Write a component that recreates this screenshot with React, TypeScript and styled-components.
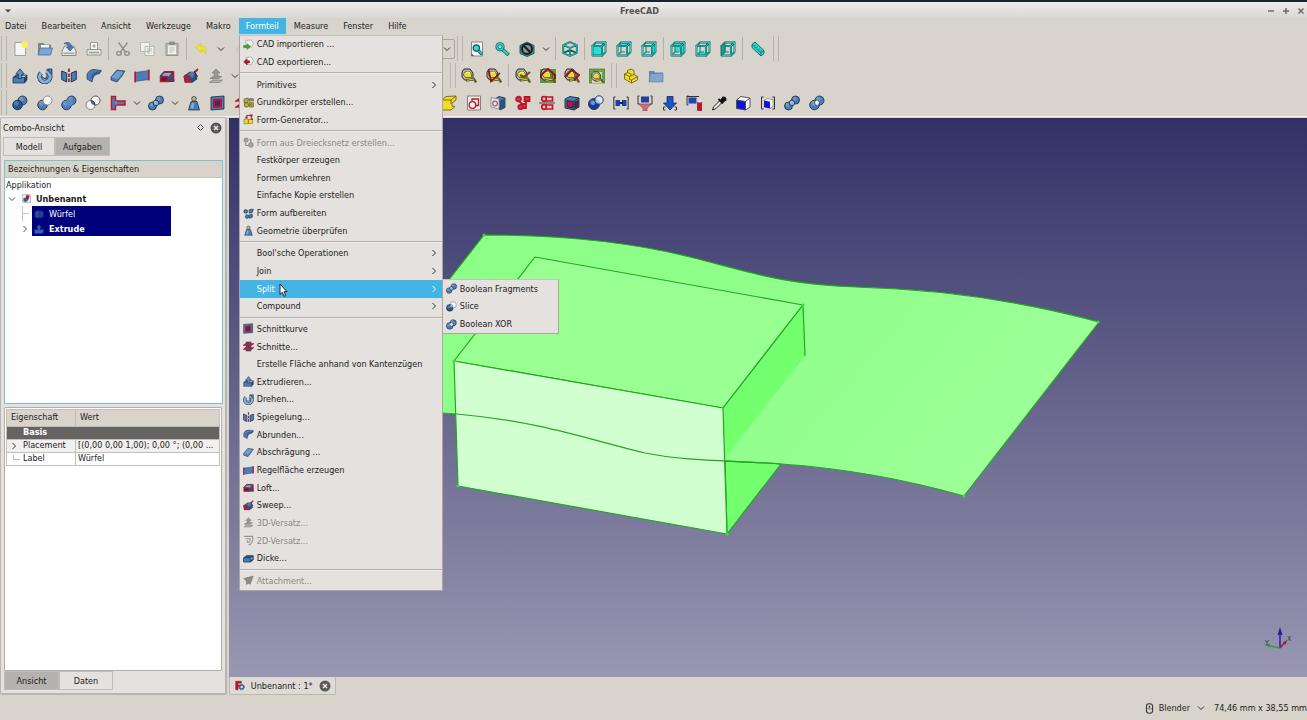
import React from "react";
import styled, { createGlobalStyle, css } from "styled-components";

const color = {
  chrome: "#d8d4cc",
  panel: "#e4e1de",
  tabOff: "#b5b3af",
  line: "#b0aca6",
  text: "#1c1c1c",
  muted: "#8b8986",
  blue: "#42b5e5",
  navy: "#00007c",
};

const GlobalStyle = createGlobalStyle`
  * { box-sizing: border-box; }
  html, body { margin: 0; padding: 0; }
  body {
    background: ${color.chrome};
    color: ${color.text};
    font: 9px/12px "DejaVu Sans Condensed", "DejaVu Sans", sans-serif;
    overflow: hidden;
  }
  button, select {
    font: inherit;
    color: inherit;
    background: none;
    border: 0;
    padding: 0;
    margin: 0;
  }
  svg { display: block; }
`;

/* ---------- icons, all on a 16 x 16 grid ---------- */

const B = "#4a7db8";
const L = "#86b0dc";
const D = "#2b527f";
const K = "#16283e";
const R = "#c01428";
const T = "#2fdcd4";
const TK = "#0e5a58";
const Y = "#f0dc28";
const YK = "#6e6410";

const Ball = ({ x, y, r, fill = B }: { x: number; y: number; r: number; fill?: string }) => (
  <g>
    <circle cx={x} cy={y} r={r} fill={fill} stroke={K} strokeWidth=".8" />
    <circle cx={x - r / 4} cy={y - r / 3} r={r / 2} fill="#fff" opacity=".22" />
  </g>
);

const Cube = ({ front = "none", top = "none", side = "none", back = false }: { front?: string; top?: string; side?: string; back?: boolean }) => (
  <g stroke={TK} strokeLinejoin="round">
    {back && <path d="M5 1.500h9.500v9.500H5z" fill={T} stroke="none" />}
    <path d="M1.500 5h9.500v9.500h-9.500z" fill={front} strokeWidth="1.800" />
    <path d="M1.500 5L5 1.500h9.500L11 5z" fill={top} strokeWidth="1.800" />
    <path d="M11 5l3.500-3.500v9.500L11 14.500z" fill={side} strokeWidth="1.800" />
    <path d="M1.500 5h9.500v9.500h-9.500zM1.500 5L5 1.500h9.500L11 5M14.500 1.500v9.500L11 14.500" fill="none" stroke={T} strokeWidth=".8" />
    {front === "none" && <path d="M5 6v5M5 11h4M5 11l-2 2" fill="none" stroke="#157f7a" strokeWidth="1.100" />}
  </g>
);

const Tape = () => (
  <g>
    <path d="M1 4l2-3h6l3 4v7H3.500L1 9z" fill="#b0b0a6" stroke="#2d2d2a" strokeWidth="1" />
    <path d="M2.500 7c0-4 6.500-5 8-1v3.500h-6z" fill={Y} stroke="#4f4a10" strokeWidth=".7" />
    <path d="M4.500 5.500c1-1.800 3.500-2 4.500-.5" fill="none" stroke="#fff9b8" strokeWidth="1" />
    <path d="M5 12.500l8-1.500 2 3.500" fill="none" stroke="#5a5a2c" strokeWidth="2.400" />
    <path d="M6 12.300l6.500-1.200" fill="none" stroke={Y} strokeWidth=".9" />
  </g>
);

const Page = () => <path d="M3 1.500h10.500v13H3z" fill="#f6f6f4" stroke="#8f8f8b" strokeWidth=".8" />;

const Brackets = () => (
  <path d="M3.500 2H1.500v12h2M12.500 2h2v12h-2" fill="none" stroke="#333" strokeWidth="1" />
);

const art: Record<string, React.ReactNode> = {
  new: (
    <g>
      <Page />
      <circle cx="12.500" cy="3.500" r="3.500" fill="#f6f06a" opacity=".9" />
      <circle cx="12.500" cy="3.500" r="1.700" fill="#fffb2a" />
    </g>
  ),
  open: (
    <g>
      <path d="M1.500 13V2.500h5l1 1.500h6v9z" fill="#8c8c88" stroke="#6b6b68" strokeWidth=".7" />
      <path d="M4 4h8v4H4z" fill="#f3f3f0" />
      <path d="M1 14L3 7h12.500l-2 7z" fill="#7aa6d8" stroke="#47709f" strokeWidth=".8" />
    </g>
  ),
  save: (
    <g>
      <path d="M1 10l2.500-5h9l2.500 5v4.500H1z" fill="#e9e9e5" stroke="#7d7d79" strokeWidth=".9" />
      <path d="M2.500 11.500h11v1.500h-11z" fill="#a8a8a3" />
      <path d="M3 2.500c4-2.500 7.500-.5 7.500 3.500h2L9 10 5.500 6h2c0-2-1.500-3.500-4.500-3.500z" fill={B} stroke={D} strokeWidth=".7" />
    </g>
  ),
  print: (
    <g stroke="#85857f" strokeWidth=".8">
      <path d="M4.500 1.500h7v7h-7z" fill="#fbfbf9" />
      <path d="M8 3v4M6 5h4" />
      <path d="M1 8.500h14V14H1z" fill="#e6e6e2" />
      <path d="M3 11.500h10" stroke="#9b9b96" strokeWidth="1.400" />
    </g>
  ),
  cut: (
    <g fill="none" stroke="#8b8b86" strokeWidth="1.300">
      <path d="M3.500 1.500l7 9.500M12.500 1.500l-7 9.500" />
      <ellipse cx="4" cy="12.500" rx="2.300" ry="1.800" />
      <ellipse cx="12" cy="12.500" rx="2.300" ry="1.800" />
    </g>
  ),
  copy: (
    <g fill="#efefec" stroke="#aeaea9" strokeWidth=".8">
      <path d="M1.500 1.500h9v9h-9zM6 5.500h9v9H6z" />
      <path d="M8 8h5M8 10h5M8 12h3" />
    </g>
  ),
  paste: (
    <g stroke="#94948f" strokeWidth="1">
      <path d="M2 2.500h12v12H2z" fill="#bcbab2" />
      <path d="M4 4.500h8v8.500H4z" fill="#efefec" stroke="none" />
      <path d="M5.500 1h5v2.500h-5z" fill="#8b8b86" />
      <path d="M5.500 7h5M5.500 9h5M5.500 11h3" strokeWidth=".6" />
    </g>
  ),
  undo: <path d="M1.500 6.500L7 2v3c5 0 6.500 3 4.500 8.500C11 10.500 9.500 9.500 7 9.500V12z" fill="#eadf3c" stroke="#cfc23a" strokeWidth=".6" />,
  redo: <path d="M14.500 6.500L9 2v3c-5 0-6.500 3-4.500 8.500C5 10.500 6.500 9.500 9 9.500V12z" fill="#cfccc4" />,
  extrude: (
    <g stroke={K} strokeWidth=".7" strokeLinejoin="round">
      <path d="M1 9.500l3-2.500h11l-2.500 2.500V15L15 12V7" fill={D} />
      <path d="M1 9.500h11.500v5.500H1z" fill={B} />
      <path d="M6.300 10.500V6H3.800L8 .8 12.200 6H9.700v4.500z" fill="#5f93cc" />
    </g>
  ),
  revolve: (
    <g>
      <path d="M9 3.500A5.300 5.300 0 1 1 4 5" fill="none" stroke={K} strokeWidth="4.600" />
      <path d="M9 3.500A5.300 5.300 0 1 1 4 5" fill="none" stroke={L} strokeWidth="3.200" />
      <path d="M5 8.500a3 3 0 0 0 5 1V6" fill="none" stroke={D} strokeWidth="1.300" />
      <path d="M10.500 1h4.500v5.500l-2-1.500z" fill={B} stroke={K} strokeWidth=".7" />
    </g>
  ),
  mirror: (
    <g>
      <path d="M.7 3l5 2v9l-5-2.500zM15.300 3l-5 2v9l5-2.500z" fill={B} stroke={K} strokeWidth=".9" />
      <path d="M8 .5v15" stroke="#90232c" strokeWidth="1.700" strokeDasharray="3.500 1.500" />
    </g>
  ),
  fillet: (
    <g stroke={K} strokeWidth=".6">
      <path d="M1 7c1-4 4-5.500 7-5.500l7.500 1L13 6c-4 0-6 2-7 8L1 11z" fill={B} />
      <path d="M5.500 8c1-3 3-4 7-4.500l3-1L13 6c-4 0-6 2-7 8z" fill={D} stroke="none" opacity=".65" />
    </g>
  ),
  chamfer: (
    <g stroke={K} strokeWidth=".6">
      <path d="M1 9l6-7 8 1-3 5-5 6-6-2z" fill={B} />
      <path d="M1.500 9.500L7.500 3l6 1-6 7z" fill={L} stroke="none" opacity=".65" />
    </g>
  ),
  ruled: (
    <g>
      <path d="M1 4.500l14-2v9l-14 2z" fill={B} stroke={D} strokeWidth=".6" />
      <path d="M1.200 3.500v11M14.800 1.500v11" stroke={R} strokeWidth="1.600" />
    </g>
  ),
  loft: (
    <g>
      <path d="M1 8l4-4.500h9l1 10H8z" fill={D} stroke={K} strokeWidth=".8" />
      <path d="M5 4h9.500v9.500" fill="none" stroke={R} strokeWidth="1.600" />
      <path d="M2.500 7.500L5.500 5h7L9 9z" fill={L} />
      <path d="M1.500 8.500h7l.5 5H1.500z" fill="#3c2a5c" stroke={R} strokeWidth="1.600" />
    </g>
  ),
  sweep: (
    <g>
      <path d="M1 8l6-4 5 1 2 6-5 3.500-7-1z" fill={D} stroke={K} strokeWidth=".7" />
      <path d="M4.500 7l4-3.500 4 1-3 5.500z" fill={B} />
      <path d="M1.500 9l4.500-1 1.500 5.500-5 .5zM12 4l3-3" fill="none" stroke={R} strokeWidth="1.800" />
      <path d="M11 3l3.500 6" stroke={K} strokeWidth="1.200" />
    </g>
  ),
  offset3d: (
    <g fill="#989894" stroke="#71716d" strokeWidth=".6">
      <path d="M1.500 14.500l3-2.500h10l-3 2.500z" fill="#b2b1ac" />
      <path d="M6.300 8V5H4L8 1l4 4H9.700v3l4 .5-3.200 2H2l3-2z" />
    </g>
  ),
  offset2d: (
    <g fill="none" stroke="#92928e" strokeWidth="1.500">
      <path d="M1.500 2H14c1 6-1 11-6 12.500M4 5.500h6.500c.3 3-1 5-3 5.500-2 0-2-2-.5-3" />
    </g>
  ),
  boolCombo: (
    <g>
      <Ball x={10.5} y={5.500} r={4.500} />
      <Ball x={5.500} y={10} r={4.800} fill="#28558e" />
    </g>
  ),
  boolCut: (
    <g>
      <Ball x={5.500} y={10} r={4.800} fill={B} />
      <circle cx="10.500" cy="5.500" r="4.500" fill="#f6f6f4" stroke="#777" strokeWidth=".8" />
    </g>
  ),
  boolFuse: (
    <g>
      <Ball x={10.5} y={5.500} r={4.500} />
      <Ball x={5.500} y={10} r={4.800} />
      <circle cx="8.500" cy="7.500" r="3.400" fill="#5c8dc6" />
    </g>
  ),
  boolCommon: (
    <g>
      <g fill="#f4f4f2" stroke="#777" strokeWidth=".9">
        <circle cx="10.500" cy="5.500" r="4.500" />
        <circle cx="5.500" cy="10" r="4.500" />
      </g>
      <path d="M6 5.600a4.500 4.500 0 0 1 4 4.300 4.500 4.500 0 0 1-4-4.300z" fill={B} stroke={K} strokeWidth=".8" />
      <path d="M10.500 1a4.500 4.500 0 1 0 .1 0z" fill="none" stroke="#777" strokeWidth=".8" />
    </g>
  ),
  slice: (
    <g>
      <circle cx="10.500" cy="5.500" r="4.500" fill="#f6f6f4" stroke="#777" strokeWidth=".8" />
      <Ball x={5.500} y={10} r={4.800} fill={D} />
      <circle cx="8" cy="7.500" r="2" fill={L} />
    </g>
  ),
  fragments: (
    <g>
      <Ball x={11.500} y={5} r={4} />
      <Ball x={4.500} y={11} r={4} />
      <Ball x={8} y={8} r={2.800} fill={L} />
    </g>
  ),
  xor: (
    <g>
      <Ball x={10.5} y={5.500} r={4.500} />
      <Ball x={5.500} y={10} r={4.800} />
      <ellipse cx="8" cy="7.800" rx="2.400" ry="2.800" fill="#e6ecf2" stroke={K} strokeWidth=".6" />
    </g>
  ),
  join: (
    <g>
      <path d="M1.500 1.500h4v4.500h9.500v4H5.500v4.500h-4z" fill={B} stroke={R} strokeWidth="1.500" />
      <path d="M6 6v4" stroke={L} strokeWidth=".8" />
    </g>
  ),
  weight: (
    <g stroke={K} strokeWidth=".7">
      <circle cx="8" cy="3.800" r="2.300" fill="#c8b574" />
      <path d="M5 6.500h6l2.500 8.500h-11z" fill={B} />
      <path d="M6 8l-1.500 5.500h3L8 8z" fill={L} stroke="none" />
    </g>
  ),
  section: (
    <g>
      <path d="M1 2l13-1v13l-13 1z" fill={B} stroke={K} strokeWidth=".8" />
      <path d="M4 5l7-.5v7l-7 .5z" fill="#3f2b63" stroke={R} strokeWidth="2" />
    </g>
  ),
  sections: (
    <g>
      <path d="M4 1h8v14H4z" fill={D} />
      <path d="M1 6l3-2h11l-3 2zM1 12l3-2h11l-3 2z" fill={B} stroke={R} strokeWidth="1.500" />
    </g>
  ),
  thickness: (
    <g stroke={K} strokeWidth=".7">
      <path d="M1 7l4-3.500h10V10l-4 3H1z" fill={D} />
      <path d="M1 7h10v6H1z" fill={B} />
      <circle cx="12.500" cy="8" r="2" fill={L} />
    </g>
  ),
  attach: <path d="M1 5l14-3.500-4.500 12-3-1.500L5 14V9z" fill="#8b8b88" stroke="#6f6f6c" strokeWidth=".7" />,
  mesh: (
    <g fill="#a5a4a1" stroke="#858481" strokeWidth="1">
      <circle cx="4.500" cy="4.500" r="3.200" />
      <circle cx="11.500" cy="11.500" r="3.500" />
      <path d="M4 8v4.500h4M9 4h2.500v4" fill="none" strokeWidth="1.500" />
    </g>
  ),
  refine: (
    <g fill={B} stroke={K} strokeWidth=".9">
      <circle cx="4" cy="5" r="2.700" />
      <path d="M9 2.500l6-1-1.500 5-4.500 1z" />
      <circle cx="6" cy="12.500" r="2.600" />
      <path d="M9 10l4.500-1v4.500L9.500 15z" />
    </g>
  ),
  import: (
    <g>
      <path d="M4 2l8-.5 3 5-3 6.500-7-1z" fill="#f3f3f0" stroke="#8e8e8a" strokeWidth=".8" />
      <path d="M1 9.500h5V7l5 4-5 4v-2.500H1z" fill="#48a53a" stroke="#236b1b" strokeWidth=".7" />
    </g>
  ),
  export: (
    <g>
      <path d="M4 2l8-.5 3 5-3 6.500-7-1z" fill="#f3f3f0" stroke="#8e8e8a" strokeWidth=".8" />
      <path d="M9.500 7H6V4L1 8.500 6 13v-3h3.500z" fill={R} stroke="#6b0812" strokeWidth=".7" />
    </g>
  ),
  primitives: (
    <g fill="#b9b13a" stroke="#4f4b15" strokeWidth=".9">
      <path d="M1.500 3l6-1.500v6l-6 1z" />
      <path d="M9 6V2.500h6V6" fill="#8e8c6b" />
      <circle cx="5" cy="11.500" r="3.300" />
      <path d="M9 7.500h6v7H9z" />
      <circle cx="12" cy="11" r="1.300" fill={Y} />
    </g>
  ),
  builder: (
    <g>
      <path d="M1.500 8l6-1v7l-6 .5zM8 8h6v5.500l-6 .5z" fill={Y} stroke={YK} strokeWidth=".8" />
      <path d="M5.500 5V2h6M12 6V3" fill="none" stroke="#333" strokeWidth="1.200" />
      <path d="M3.500 3.500h3v3h-3zM10 .8h4v3h-4zM11 6h3.500v2.500H11z" fill={R} />
    </g>
  ),
  fitAll: (
    <g>
      <path d="M2.500 1h11v14h-11z" fill="#f6f6f4" stroke="#7d7d79" strokeWidth=".9" />
      <path d="M9 9l4 4.500" stroke={TK} strokeWidth="3.200" />
      <path d="M9 9l4 4" stroke={T} strokeWidth="1.600" />
      <circle cx="7.300" cy="7" r="3.200" fill={T} stroke={TK} strokeWidth="1.200" />
      <path d="M2.500 12.500l2.500 2.500h-2.500z" fill="#555" />
    </g>
  ),
  zoomSel: (
    <g>
      <path d="M8 8l6.500 6" stroke={TK} strokeWidth="3.600" />
      <path d="M8 8l6 5.500" stroke={T} strokeWidth="2" />
      <circle cx="6" cy="5.800" r="4.600" fill={TK} />
      <circle cx="6" cy="5.800" r="3.700" fill={T} />
      <circle cx="6" cy="5.800" r="1.900" fill="#b9e6df" stroke={TK} strokeWidth=".8" />
    </g>
  ),
  drawStyle: (
    <g>
      <path d="M1 4.500l7-3.500 7 3.500v8L8 15.500l-7-3z" fill="#219c94" stroke={TK} strokeWidth=".9" />
      <circle cx="8" cy="8" r="5" fill="#87908c" stroke="#22171a" strokeWidth="2" />
      <path d="M4.500 4.500l7 7" stroke="#22171a" strokeWidth="2" />
    </g>
  ),
  axo: (
    <g fill="none" strokeLinejoin="round">
      <path d="M1.200 4L8 1.200 14.800 4v8L8 15l-6.800-3zM1.200 4L8 7l6.800-3M8 7v8M1.200 12L8 9l6.800 3" stroke={TK} strokeWidth="1.800" />
      <path d="M1.200 4L8 1.200 14.800 4v8L8 15l-6.800-3zM1.200 4L8 7l6.800-3M8 7v8" stroke={T} strokeWidth=".7" />
    </g>
  ),
  front: <Cube front={T} />,
  top: <Cube top={T} />,
  right: <Cube side={T} />,
  rear: <Cube back />,
  bottom: (
    <g>
      <path d="M1.500 14.500L5 11h9.500L11 14.500z" fill={T} />
      <Cube />
    </g>
  ),
  left: (
    <g>
      <Cube />
      <path d="M1.500 5L5 1.500V11l-3.500 3.500z" fill="#139f92" stroke={TK} strokeWidth=".6" />
    </g>
  ),
  ruler: (
    <g>
      <path d="M2 3.500L5 1l9 8.500v3L11 15 2 6.500z" fill={T} stroke={TK} strokeWidth=".9" />
      <path d="M2 3.500l9 8.500 3-2.500M11 12v3" stroke={TK} strokeWidth=".7" fill="none" />
      <path d="M5.500 3.500L4.500 5M7.500 5.500L6.500 7M9.500 7.500L8.500 9M11.500 9l-1 2" stroke={TK} strokeWidth=".7" />
    </g>
  ),
  tape: <Tape />,
  tapeAngle: (
    <g>
      <Tape />
      <path d="M14 5L5 13.500 2.500 1.500" fill="none" stroke="#7e1518" strokeWidth="1.600" />
    </g>
  ),
  tapeRefresh: (
    <g>
      <Tape />
      <path d="M5 7l4 2 6-5" fill="none" stroke="#5b5214" strokeWidth="2" />
    </g>
  ),
  tapeAll: (
    <g>
      <path d="M0 1h16v14H0z" fill="#5d9a3a" />
      <Tape />
      <path d="M1 10V7l7-6 7 6v4" fill="none" stroke="#8f1519" strokeWidth="2" />
    </g>
  ),
  tape3d: (
    <g>
      <Tape />
      <path d="M1 9L7.500 2 15 7l-5 5" fill="none" stroke="#8f1519" strokeWidth="2" />
    </g>
  ),
  tapeDelta: (
    <g>
      <path d="M0 1h16v14H0z" fill="#6aa544" stroke="#3c6625" strokeWidth=".6" />
      <path d="M3 4h10v11H3z" fill={color.chrome} />
      <g transform="translate(2 3) scale(.8)">
        <Tape />
      </g>
    </g>
  ),
  part: (
    <g stroke={YK} strokeWidth=".9" strokeLinejoin="round">
      <path d="M1.500 6l3-1.500V2.500L8 1l3 1.500v4l3.500 2V12L8.500 15l-7-4z" fill={Y} />
      <path d="M1.500 6l5 2.500v3L8.500 12v3M6.500 8.500L11 6.500M8.500 12l6-3.500M4.500 4.500L8 6v2" fill="none" />
    </g>
  ),
  folder: (
    <g>
      <path d="M1 3h5l1 1.500h8V14H1z" fill="#6187b2" />
      <path d="M2.500 5.500H15V14H1z" fill="#82a6d0" stroke="#5a7ea8" strokeWidth=".6" />
    </g>
  ),
  yellowL: (
    <g stroke={YK} strokeWidth=".9">
      <path d="M1 5l4-3.500 10-.5v4L11 8v3l3 .5-4 3.500H1z" fill={Y} />
      <path d="M1 5h9l5-4M10 5v4" fill="none" />
    </g>
  ),
  sketch: (
    <g>
      <path d="M1.500 1h13v14h-13z" fill="#ededea" stroke="#777" strokeWidth=".9" />
      <circle cx="6.500" cy="10" r="3.300" fill="none" stroke={R} strokeWidth="1.300" />
      <path d="M6 6V4h6.500v6.500H10" fill="none" stroke={R} strokeWidth="1.300" />
    </g>
  ),
  mapSketch: (
    <g>
      <path d="M5 4l4-2.500 6 1.500v9.500l-5 2.500z" fill={B} stroke={K} strokeWidth=".8" />
      <path d="M10 5.500V15l5-2.500V3z" fill={D} />
      <path d="M1 2.500l8 1.500v10l-8-2z" fill="#dfe6ec" stroke="#777" strokeWidth=".7" />
      <circle cx="5" cy="8.500" r="2.300" fill="none" stroke="#b05a66" strokeWidth="1.200" />
    </g>
  ),
  clones: (
    <g fill="#c2434f" stroke={R} strokeWidth="1.800">
      <circle cx="3.500" cy="4" r="2.400" />
      <path d="M9.500 2h5v4h-5zM7 9h4v4H7z" />
      <circle cx="5.500" cy="12" r="2.200" />
      <path d="M4 6l3 3M12 6l-2 3" />
    </g>
  ),
  mirrored: (
    <g fill="#f2c4c4" stroke={R} strokeWidth="1.700">
      <path d="M7 2h6.500v4H7zM7 10h6.500v4H7z" />
      <circle cx="5" cy="4" r="2.300" />
      <circle cx="5" cy="12" r="2.300" />
      <path d="M0 8h16" stroke="#333" strokeWidth=".9" />
    </g>
  ),
  redBox: (
    <g stroke={K} strokeWidth=".9">
      <path d="M1 4l5-2.500 9 1.500v9l-5 3-9-2z" fill={B} />
      <path d="M3 5.500l6 1v6.500l-6-1z" fill={R} />
      <path d="M10 6v9M10 6l5-3" fill="none" />
      <path d="M11 7l3-1.500v6L11 13z" fill="#8d1020" />
    </g>
  ),
  shape: (
    <g>
      <Ball x={6} y={9} r={5.500} fill="#123ba0" />
      <circle cx="11" cy="5" r="4.200" fill="#e8eef7" fillOpacity=".75" stroke="#123b80" strokeWidth="1" />
      <circle cx="5" cy="8" r="2" fill={L} opacity=".7" />
    </g>
  ),
  bracketShapes: (
    <g>
      <path d="M2.500 2H.8v12h1.700M13.500 2h1.700v12h-1.700" fill="none" stroke="#333" strokeWidth="1" />
      <path d="M2.500 5h4.500v6H2.500zM9 5h4.500v6H9z" fill="#1c3fae" />
      <path d="M7 8h3" stroke={K} strokeWidth="2" />
    </g>
  ),
  funnel: (
    <g>
      <path d="M2.500 1H1v8h1.500M13.500 1H15v8h-1.500" fill="none" stroke="#333" strokeWidth="1" />
      <path d="M4 1.500h8v6H4z" fill="#1c3fae" />
      <path d="M1.500 9h13l-4.500 4v3H6v-3z" fill="#d36d74" stroke="#94434a" strokeWidth=".7" />
    </g>
  ),
  arrowDown: (
    <g>
      <path d="M5 1.500h6V8h3.500L8 15 1.500 8H5z" fill="#1d55c8" stroke="#0d2a6b" strokeWidth=".8" />
      <path d="M3.500 12H1.500v3h2M12.500 12h2v3h-2" fill="none" stroke="#333" strokeWidth="1" />
    </g>
  ),
  spray: (
    <g>
      <path d="M2.500 1H1v9h1.500M1 1.500h12" fill="none" stroke="#333" strokeWidth="1" />
      <path d="M2.500 2.500h8v6h-8z" fill="#1f47ad" />
      <path d="M11.500 7.500h4.300V15.500h-4.300z" fill={R} stroke="#6c0812" strokeWidth=".6" />
      <path d="M12.500 5h2.500v2.500h-2.500z" fill="#ececec" />
    </g>
  ),
  dropper: (
    <g>
      <path d="M1.500 15l1-3L9 5.500l2 2-6 6z" fill="#efefef" stroke="#222" strokeWidth="1" />
      <path d="M7.500 4l4.500 4.500M10 5.500l2-3a2 2 0 0 1 2.500 2.500l-3 2z" fill="#111" stroke="#111" strokeWidth="1.800" />
    </g>
  ),
  blueCube: (
    <g stroke="#4a4a4a" strokeWidth=".9" strokeLinejoin="round">
      <path d="M1.500 5L6 1.500l9 1.500v9l-4.500 3z" fill="#f5f5f5" />
      <path d="M1.500 5l9 1.500V15l-9-1.500z" fill="#1212d8" />
      <path d="M10.500 6.500L15 3" />
    </g>
  ),
  bracketCube: (
    <g>
      <Brackets />
      <path d="M4 5.500L7 3.500l6 1v7L10 13.500z" fill="#f5f5f5" stroke="#555" strokeWidth=".5" />
      <path d="M4 5.500l6 1.200v6.800l-6-1.200z" fill="#1212d8" />
    </g>
  ),
  document: (
    <g>
      <path d="M1 1h14v14H1z" fill="#f0f0ee" stroke="#8a8a86" strokeWidth=".9" />
      <path d="M7 2h6v5l-3 3-3-2z" fill={R} />
      <path d="M3 8l5-2 3 4-4 4-4-1.500z" fill="#2a5fae" stroke={K} strokeWidth=".6" />
    </g>
  ),
  box: (
    <g fill="#294c98" stroke="#15306e" strokeWidth=".9">
      <path d="M1.500 4L6 2.500l3 1V13l-3 1.500L1.500 13zM10.500 4h4v9h-4z" />
      <path d="M9.700 2v13" stroke="#3c66b8" />
    </g>
  ),
  extrudeDim: (
    <g fill="#3a62b4" stroke="#1d3c86" strokeWidth=".8">
      <path d="M1 9h12l2-1.500V13l-2 2H1z" />
      <path d="M6.300 10V6H4l4-5 4 5H9.700v4z" />
    </g>
  ),
  freecad: (
    <g>
      <path d="M1 1h9.500v3.500H5V7h3.500v3.500H5V15H1z" fill="#c4141c" stroke="#7a0b10" strokeWidth=".6" />
      <circle cx="10.800" cy="10.500" r="3.300" fill="none" stroke="#3d62a3" strokeWidth="2.300" />
      <circle cx="10.800" cy="10.500" r="4.700" fill="none" stroke="#3d62a3" strokeWidth="1.300" strokeDasharray="1.800 1.890" />
    </g>
  ),
  mouse: (
    <g fill="none" stroke="#333" strokeWidth="1.500">
      <rect x="3.500" y="1" width="9" height="14" rx="4" />
      <path d="M8 4v3" strokeWidth="2" />
      <path d="M4 8.500h8" strokeWidth=".8" />
    </g>
  ),
};

const Icon = ({ name, size = 16 }: { name: string; size?: number }) => (
  <svg width={size} height={size} viewBox="0 0 16 16" aria-hidden="true">
    {art[name]}
  </svg>
);

const Chevron = ({ dir = "down" }: { dir?: "down" | "right" }) => (
  <svg width="8" height="8" viewBox="0 0 8 8" fill="none" stroke="currentColor" strokeWidth=".9" aria-hidden="true">
    <path d={dir === "down" ? "M1 2.500l3 3 3-3" : "M2.500 1l3 3-3 3"} />
  </svg>
);

const CloseDot = () => (
  <svg width="12" height="12" viewBox="0 0 12 12" aria-hidden="true">
    <circle cx="6" cy="6" r="5.500" fill="#5c5a57" />
    <path d="M4 4l4 4M8 4l-4 4" stroke="#efeeec" strokeWidth="1.400" />
  </svg>
);

/* ---------- window frame ---------- */

const Window = styled.div`
  display: flex;
  flex-direction: column;
  min-height: 100vh;
`;

const TitleBar = styled.header`
  display: flex;
  align-items: center;
  height: 18px;
  padding: 1px 0 0 2px;
  border-top: 2px solid #1d232c;
  background: linear-gradient(#eeeeee, #d9d7d2);
  color: #55534f;
`;

const Title = styled.h1`
  flex: 1;
  margin: 0;
  font-size: 9px;
  line-height: 12px;
  text-align: center;
`;

const WindowButtons = styled.div`
  display: flex;
  gap: 3px;
`;

const WindowButton = styled.button`
  display: grid;
  place-items: center;
  width: 12px;
  height: 12px;
`;

const MenuBar = styled.nav`
  display: flex;
  gap: 1px;
  height: 17px;
  margin-left: -2px;
  position: relative;
  z-index: 5;
`;

const MenuHost = styled.div`
  position: relative;
`;

const MenuTitle = styled.button<{ $open?: boolean }>`
  height: 16px;
  padding: 0 7px;
  ${(p) =>
    p.$open &&
    css`
      background: ${color.blue};
      color: #fff;
    `}
`;

/* ---------- menus ---------- */

const Menu = styled.div<{ $sub?: boolean }>`
  position: absolute;
  display: flex;
  flex-direction: column;
  border: 1px solid #aaa6a2;
  border-top-color: #c4c0bc;
  background: ${color.panel};
  color: ${color.text};
  white-space: nowrap;
  ${(p) =>
    p.$sub
      ? css`
          top: -1px;
          left: 100%;
          width: 117px;
          min-height: 55px;
        `
      : css`
          top: 17px;
          left: 0;
          width: 204px;
          min-height: 556px;
        `}
`;

const MenuRow = styled.div`
  position: relative;
  display: flex;
  flex: 1;
`;

const MenuItem = styled.button<{ $active?: boolean }>`
  display: flex;
  flex: 1;
  align-items: center;
  padding: 0 4px 1px 3px;
  background: ${(p) => (p.$active ? color.blue : "none")};
  color: ${(p) => (p.$active ? "#fff" : "inherit")};
  text-align: left;

  &:disabled {
    color: ${color.muted};
  }
`;

const IconSlot = styled.span`
  width: 14px;
  flex: none;
`;

const MenuLabel = styled.span`
  flex: 1;
`;

const Divider = styled.hr`
  flex: none;
  width: 100%;
  height: 2px;
  margin: 1px 0 2px;
  border: solid #b5b2ad;
  border-width: 1px 0 0;
  background: #efedeb;
`;

const Pointer = styled.svg`
  position: absolute;
  left: 39px;
  top: 3px;
  z-index: 2;
`;

type Entry = { label: string; icon?: string; off?: boolean; more?: boolean; open?: boolean } | null;

const menuEntries: Entry[] = [
  { label: "CAD importieren ...", icon: "import" },
  { label: "CAD exportieren...", icon: "export" },
  null,
  { label: "Primitives", more: true },
  { label: "Grundkörper erstellen...", icon: "primitives" },
  { label: "Form-Generator...", icon: "builder" },
  null,
  { label: "Form aus Dreiecksnetz erstellen...", icon: "mesh", off: true },
  { label: "Festkörper erzeugen" },
  { label: "Formen umkehren" },
  { label: "Einfache Kopie erstellen" },
  { label: "Form aufbereiten", icon: "refine" },
  { label: "Geometrie überprüfen", icon: "weight" },
  null,
  { label: "Bool'sche Operationen", more: true },
  { label: "Join", more: true },
  { label: "Split", more: true, open: true },
  { label: "Compound", more: true },
  null,
  { label: "Schnittkurve", icon: "section" },
  { label: "Schnitte...", icon: "sections" },
  { label: "Erstelle Fläche anhand von Kantenzügen" },
  { label: "Extrudieren...", icon: "extrude" },
  { label: "Drehen...", icon: "revolve" },
  { label: "Spiegelung...", icon: "mirror" },
  { label: "Abrunden...", icon: "fillet" },
  { label: "Abschrägung ...", icon: "chamfer" },
  { label: "Regelfläche erzeugen", icon: "ruled" },
  { label: "Loft...", icon: "loft" },
  { label: "Sweep...", icon: "sweep" },
  { label: "3D-Versatz...", icon: "offset3d", off: true },
  { label: "2D-Versatz...", icon: "offset2d", off: true },
  { label: "Dicke...", icon: "thickness" },
  null,
  { label: "Attachment...", icon: "attach", off: true },
];

const splitEntries: Entry[] = [
  { label: "Boolean Fragments", icon: "fragments" },
  { label: "Slice", icon: "slice" },
  { label: "Boolean XOR", icon: "xor" },
];

const MenuList = ({ entries, sub }: { entries: Entry[]; sub?: boolean }) => (
  <Menu $sub={sub} role="menu">
    {entries.map((e, i) =>
      e === null ? (
        <Divider key={i} />
      ) : (
        <MenuRow key={i}>
          <MenuItem role="menuitem" disabled={e.off} $active={e.open}>
            <IconSlot>{e.icon && <Icon name={e.icon} size={11} />}</IconSlot>
            <MenuLabel>{e.label}</MenuLabel>
            {e.more && <Chevron dir="right" />}
          </MenuItem>
          {e.open && (
            <>
              <MenuList entries={splitEntries} sub />
              <Pointer width="9" height="14" viewBox="0 0 9 14" aria-hidden="true">
                <path d="M1 1v10.500l2.300-2.200 1.700 4 1.700-.8-1.700-3.800h3z" fill="#fff" stroke="#111" strokeWidth=".9" />
              </Pointer>
            </>
          )}
        </MenuRow>
      )
    )}
  </Menu>
);

/* ---------- toolbars ---------- */

const Toolbars = styled.div`
  border-bottom: 1px solid #f2f1ef;
  overflow: hidden;
`;

const ToolRow = styled.div`
  display: flex;
  align-items: stretch;
  height: 27px;
`;

const ToolGroup = styled.div<{ $width: number }>`
  display: grid;
  grid-auto-flow: column;
  grid-auto-columns: 1fr;
  flex: none;
  width: ${(p) => p.$width}px;
`;

const ToolButton = styled.button`
  display: grid;
  place-items: center;
`;

const DropButton = styled.button`
  display: grid;
  place-items: center;
  flex: none;
  width: 14px;
`;

const Rule = styled.span<{ $width?: number }>`
  flex: none;
  width: ${(p) => p.$width ?? 5}px;
  margin: 2px 0;
  background: linear-gradient(#b4b0aa, #b4b0aa) center / 1px 100% no-repeat;
`;

const Handle = styled.span<{ $width?: number }>`
  flex: none;
  width: ${(p) => p.$width ?? 8}px;
  margin: 1px 0;

  &::before {
    content: "";
    display: block;
    width: 4px;
    height: 100%;
    margin: 0 auto;
    border: solid #b7b3ad;
    border-width: 0 1px;
  }
`;

const Spacer = styled.span<{ $width: number }>`
  flex: none;
  width: ${(p) => p.$width}px;
`;

const Combo = styled.select`
  flex: none;
  align-self: center;
  width: 155px;
  height: 20px;
  padding: 0 20px 0 6px;
  border: 1px solid #a8a49e;
  border-radius: 2px;
  background: ${color.chrome};
  appearance: none;
`;

const ComboWrap = styled.label`
  position: relative;
  display: flex;

  svg {
    position: absolute;
    right: 4px;
    top: 10px;
  }
`;

const Tools = ({ icons, width }: { icons: string[]; width: number }) => (
  <ToolGroup $width={width}>
    {icons.map((n, i) => (
      <ToolButton key={i} aria-label={n}>
        <Icon name={n} />
      </ToolButton>
    ))}
  </ToolGroup>
);

const Drop = () => (
  <DropButton aria-label="Mehr">
    <Chevron />
  </DropButton>
);

/* ---------- work area ---------- */

const Main = styled.main`
  display: flex;
  flex: 1;
`;

const Dock = styled.aside`
  display: flex;
  flex-direction: column;
  flex: none;
  width: 227px;
  margin-right: 2px;
  padding: 0 2px 3px;
  border: 1px solid #b9b5b0;
  border-width: 1px 2px 2px 1px;
  border-radius: 2px;
  background: ${color.panel};
`;

const DockHeader = styled.div`
  display: flex;
  align-items: center;
  height: 19px;
`;

const DockTitle = styled.h2`
  flex: 1;
  margin: 0;
  font-size: 9px;
  line-height: 12px;
  font-weight: normal;
`;

const DockButton = styled.button`
  display: grid;
  place-items: center;
  width: 15px;
  height: 14px;
`;

const Tabs = styled.div<{ $low?: boolean }>`
  display: flex;
  padding-left: ${(p) => (p.$low ? 1 : 0)}px;
`;

const Tab = styled.button<{ $width: number; $on?: boolean }>`
  width: ${(p) => p.$width}px;
  height: 19px;
  border: 1px solid #c0bcb8;
  background: ${(p) => (p.$on ? color.panel : color.tabOff)};
`;

const TreeBox = styled.section`
  flex: none;
  height: 244px;
  margin: 4px 0 3px 1px;
  border: 1px solid #7cc0c8;
  background: #fff;
`;

const TreeHead = styled.div`
  height: 17px;
  padding: 2px 3px;
  border-bottom: 1px solid #c5c1bb;
  background: ${color.chrome};
`;

const TreeRoot = styled.div`
  padding: 1px 1px 0;
  line-height: 12px;
`;

const TreeList = styled.ul`
  list-style: none;
  margin: 0;
  padding: 0;
`;

const TreeRow = styled.li<{ $bold?: boolean }>`
  display: flex;
  align-items: center;
  height: 15px;
  font-weight: ${(p) => (p.$bold ? "bold" : "normal")};
`;

const Twist = styled.span<{ $depth: number }>`
  display: grid;
  justify-items: end;
  flex: none;
  width: ${(p) => (p.$depth ? 27 : 17)}px;
  padding-right: ${(p) => (p.$depth ? 3 : 6)}px;
  color: #333;
`;

const TreeLabel = styled.span<{ $selected?: boolean }>`
  display: flex;
  align-items: center;
  gap: 5px;
  height: 15px;
  ${(p) =>
    p.$selected &&
    css`
      width: 139px;
      padding-left: 2px;
      background: ${color.navy};
      color: #fff;
    `}
`;

const PropertyBox = styled.section`
  flex: 1;
  margin: 0 1px;
  padding: 1px;
  border: 1px solid #b2afaa;
  border-radius: 1px;
  background: #fff;
`;

const PropertyTable = styled.table`
  width: 100%;
  border-collapse: collapse;
  table-layout: fixed;
  border: 1px solid #c2bfba;

  th,
  td {
    height: 13px;
    padding: 0 0 1px 2px;
    border: 1px solid #c2bfba;
    line-height: 11px;
    text-align: left;
    font-weight: normal;
    white-space: nowrap;
    overflow: hidden;
    text-overflow: ellipsis;
  }
  thead th {
    height: 17px;
    padding-left: 4px;
    background: ${color.chrome};
  }
  thead th:first-child {
    width: 69px;
  }
  tbody th {
    padding-left: 16px;
  }
  tbody tr:first-child th {
    background: #666461;
    color: #fff;
    font-weight: bold;
  }
  tbody tr:nth-child(2) > * {
    background: #f1f0ee;
  }
`;

const NameCell = styled.span`
  position: relative;

  svg {
    position: absolute;
    left: -13px;
    top: 2px;
  }
`;

const Stage = styled.section`
  display: flex;
  flex-direction: column;
  flex: 1;
  min-width: 0;
`;

const Viewport = styled.div`
  position: relative;
  flex: 1;
  min-height: 300px;
  margin-top: 1px;
  overflow: hidden;
  background: linear-gradient(#323167, #9997b1);
`;

const Scene = styled.svg`
  position: absolute;
  inset: 0;
  width: 100%;
  height: 100%;
`;

const Axes = styled.svg`
  position: absolute;
  right: 11px;
  bottom: 25px;
  font-size: 7px;
`;

const DocTabs = styled.div`
  display: flex;
  height: 18px;
`;

const DocTab = styled.div`
  display: flex;
  align-items: center;
  gap: 6px;
  width: 107px;
  padding: 0 3px 0 5px;
  border: 1px solid #bbb7b1;
  border-top: 0;
  border-radius: 0 0 2px 2px;
  background: #dedad5;

  span {
    flex: 1;
    white-space: nowrap;
  }
`;

const StatusBar = styled.footer`
  display: flex;
  align-items: center;
  justify-content: flex-end;
  gap: 9px;
  height: 25px;
  padding-top: 1px;
  white-space: nowrap;
`;

const NavStyle = styled.button`
  display: flex;
  align-items: center;
  gap: 4px;

  svg:last-child {
    margin-left: 3px;
  }
`;

const Scene3D = () => (
  <Scene viewBox="229 118 1078 559" preserveAspectRatio="xMidYMid slice" aria-label="3D-Ansicht">
    <defs>
      <linearGradient id="sheet" x1="0" y1="0" x2="1" y2=".3">
        <stop offset="0" stopColor="#8aff85" />
        <stop offset=".6" stopColor="#8fff8a" />
        <stop offset="1" stopColor="#9cff98" />
      </linearGradient>
    </defs>
    <g stroke="#22a822" strokeWidth="1.200" strokeLinejoin="round" fill="none">
      <path d="M725 459L781 464 727 534z" fill="#73ff6e" />
      <path
        d="M484 235C560 235 630 242 690 257C750 272 780 284 856 287C930 289 1010 298 1099 322L964 496C900 478 840 468 781 464C730 460 690 462 645 453C590 440 540 421 456 414L350 406z"
        fill="url(#sheet)"
      />
      <path d="M535 257L803 305 723 408 454 361z" fill="#99ff93" />
      <path d="M723 408L803 305 805 356 725 458z" fill="#73ff6e" stroke="none" />
      <path d="M803 305L805 356" />
      <path d="M454 361L723 408 727 534 458 486z" fill="#d2ffd0" />
      <path d="M456 414C540 421 590 440 645 453C690 462 730 460 781 464M723 408L803 305" />
    </g>
    <g fill="#3be03b">
      <circle cx="484" cy="235" r="1.500" />
      <circle cx="1098" cy="322" r="1.500" />
      <circle cx="964" cy="496" r="1.500" />
      <circle cx="458" cy="486" r="1.500" />
      <circle cx="727" cy="534" r="1.500" />
      <circle cx="803" cy="305" r="1.500" />
      <circle cx="454" cy="361" r="1.500" />
    </g>
  </Scene>
);

const views = ["front", "top", "right"];

export default function App() {
  return (
    <Window>
      <GlobalStyle />
      <TitleBar>
        <WindowButton aria-label="Fenstermenü">
          <svg width="6" height="4" viewBox="0 0 6 4">
            <path d="M0 .5h6L3 3.500z" fill="#444" />
          </svg>
        </WindowButton>
        <Title>FreeCAD</Title>
        <WindowButtons>
          {["M1 4h6", "M1 4h6M4 1v6", "M1.500 1.500l5 5M6.500 1.500l-5 5"].map((d) => (
            <WindowButton key={d} aria-label="Fenster">
              <svg width="8" height="8" viewBox="0 0 8 8">
                <path d={d} stroke="#6a6864" strokeWidth="1.400" />
              </svg>
            </WindowButton>
          ))}
        </WindowButtons>
      </TitleBar>

      <MenuBar>
        {["Datei", "Bearbeiten", "Ansicht", "Werkzeuge", "Makro"].map((m) => (
          <MenuTitle key={m}>{m}</MenuTitle>
        ))}
        <MenuHost>
          <MenuTitle $open>Formteil</MenuTitle>
          <MenuList entries={menuEntries} />
        </MenuHost>
        {["Measure", "Fenster", "Hilfe"].map((m) => (
          <MenuTitle key={m}>{m}</MenuTitle>
        ))}
      </MenuBar>

      <Toolbars>
        <ToolRow>
          <Handle />
          <Tools icons={["new", "open", "save", "print"]} width={98} />
          <Rule />
          <Tools icons={["cut", "copy", "paste"]} width={73} />
          <Rule />
          <Tools icons={["undo"]} width={25} />
          <Drop />
          <Tools icons={["redo"]} width={24} />
          <Spacer $width={48} />
          <ComboWrap>
            <Combo aria-label="Arbeitsbereich" defaultValue="Part">
              <option>Part</option>
            </Combo>
            <Chevron />
          </ComboWrap>
          <Handle $width={10} />
          <Tools icons={["fitAll", "zoomSel", "drawStyle"]} width={74} />
          <Drop />
          <Rule />
          <Tools icons={["axo"]} width={24} />
          <Rule />
          <Tools icons={views} width={74} />
          <Rule />
          <Tools icons={["rear", "bottom", "left"]} width={74} />
          <Rule />
          <Tools icons={["ruler"]} width={25} />
          <Handle $width={12} />
        </ToolRow>
        <ToolRow>
          <Handle />
          <Tools
            icons={["extrude", "revolve", "mirror", "fillet", "chamfer", "ruled", "loft", "sweep", "offset3d"]}
            width={220}
          />
          <Drop />
          <Spacer $width={207} />
          <Handle />
          <Tools icons={["tape", "tapeAngle"]} width={49} />
          <Rule />
          <Tools icons={["tapeRefresh", "tapeAll", "tape3d", "tapeDelta"]} width={98} />
          <Handle $width={10} />
          <Tools icons={["part", "folder"]} width={49} />
        </ToolRow>
        <ToolRow>
          <Handle />
          <Tools icons={["boolCombo", "boolCut", "boolFuse", "boolCommon", "join"]} width={122} />
          <Drop />
          <Tools icons={["fragments"]} width={24} />
          <Drop />
          <Tools icons={["weight", "section", "sections"]} width={73} />
          <Spacer $width={182} />
          <Tools
            icons={[
              "yellowL", "sketch", "mapSketch", "clones", "mirrored", "redBox", "shape", "bracketShapes",
              "funnel", "arrowDown", "spray", "dropper", "blueCube", "bracketCube", "fragments", "xor",
            ]}
            width={392}
          />
        </ToolRow>
      </Toolbars>

      <Main>
        <Dock>
          <DockHeader>
            <DockTitle>Combo-Ansicht</DockTitle>
            <DockButton aria-label="Lösen">
              <svg width="7" height="7" viewBox="0 0 7 7">
                <path d="M3.500 .5l3 3-3 3-3-3z" fill="none" stroke="#444" strokeWidth=".9" />
              </svg>
            </DockButton>
            <DockButton aria-label="Schließen">
              <CloseDot />
            </DockButton>
          </DockHeader>
          <Tabs role="tablist">
            <Tab role="tab" $width={52} $on>Modell</Tab>
            <Tab role="tab" $width={55}>Aufgaben</Tab>
          </Tabs>
          <TreeBox>
            <TreeHead>Bezeichnungen &amp; Eigenschaften</TreeHead>
            <TreeRoot>Applikation</TreeRoot>
            <TreeList role="tree">
              <TreeRow role="treeitem" $bold>
                <Twist $depth={0}><Chevron /></Twist>
                <TreeLabel><Icon name="document" size={9} />Unbenannt</TreeLabel>
              </TreeRow>
              <TreeRow role="treeitem">
                <Twist $depth={1}>
                  <svg width="8" height="15" viewBox="0 0 8 15">
                    <path d="M1.500 0v15M1.500 7.500H8" stroke="#c4c4c4" />
                  </svg>
                </Twist>
                <TreeLabel $selected><Icon name="box" size={10} />Würfel</TreeLabel>
              </TreeRow>
              <TreeRow role="treeitem" $bold>
                <Twist $depth={1}><Chevron dir="right" /></Twist>
                <TreeLabel $selected><Icon name="extrudeDim" size={10} />Extrude</TreeLabel>
              </TreeRow>
            </TreeList>
          </TreeBox>
          <PropertyBox>
            <PropertyTable>
              <thead>
                <tr><th scope="col">Eigenschaft</th><th scope="col">Wert</th></tr>
              </thead>
              <tbody>
                <tr><th colSpan={2}>Basis</th></tr>
                <tr>
                  <th scope="row"><NameCell><Chevron dir="right" />Placement</NameCell></th>
                  <td>[(0,00 0,00 1,00); 0,00 °; (0,00 ...</td>
                </tr>
                <tr>
                  <th scope="row">
                    <NameCell>
                      <svg width="10" height="8" viewBox="0 0 10 8">
                        <path d="M3.500 0v4.500H10" fill="none" stroke="#bbb" />
                      </svg>
                      Label
                    </NameCell>
                  </th>
                  <td>Würfel</td>
                </tr>
              </tbody>
            </PropertyTable>
          </PropertyBox>
          <Tabs $low role="tablist">
            <Tab role="tab" $width={55}>Ansicht</Tab>
            <Tab role="tab" $width={54} $on>Daten</Tab>
          </Tabs>
        </Dock>

        <Stage>
          <Viewport>
            <Scene3D />
            <Axes width="34" height="26" viewBox="0 0 34 26">
              <path d="M18 22V8" stroke="#2a1fa8" strokeWidth="1.500" />
              <path d="M15.500 9L18 1l2.500 8z" fill="#2a1fa8" />
              <path d="M18 22L6 19.500" stroke="#2f9d43" strokeWidth="1.500" />
              <path d="M8 17.500l-6 1.300 5.500 2.700z" fill="#2f9d43" />
              <path d="M18 22l5-6" stroke="#93203f" strokeWidth="1.500" />
              <path d="M21 16.500l4-2.500-1.500 5z" fill="#93203f" />
              <text x="3" y="19" fill="#333">Y</text>
              <text x="25" y="15" fill="#333">X</text>
            </Axes>
          </Viewport>
          <DocTabs>
            <DocTab>
              <Icon name="freecad" size={11} />
              <span>Unbenannt : 1*</span>
              <DockButton aria-label="Dokument schließen">
                <CloseDot />
              </DockButton>
            </DocTab>
          </DocTabs>
        </Stage>
      </Main>

      <StatusBar>
        <NavStyle>
          <Icon name="mouse" size={11} />
          Blender
          <Chevron />
        </NavStyle>
        <span>74,46 mm x 38,55 mm</span>
      </StatusBar>
    </Window>
  );
}
